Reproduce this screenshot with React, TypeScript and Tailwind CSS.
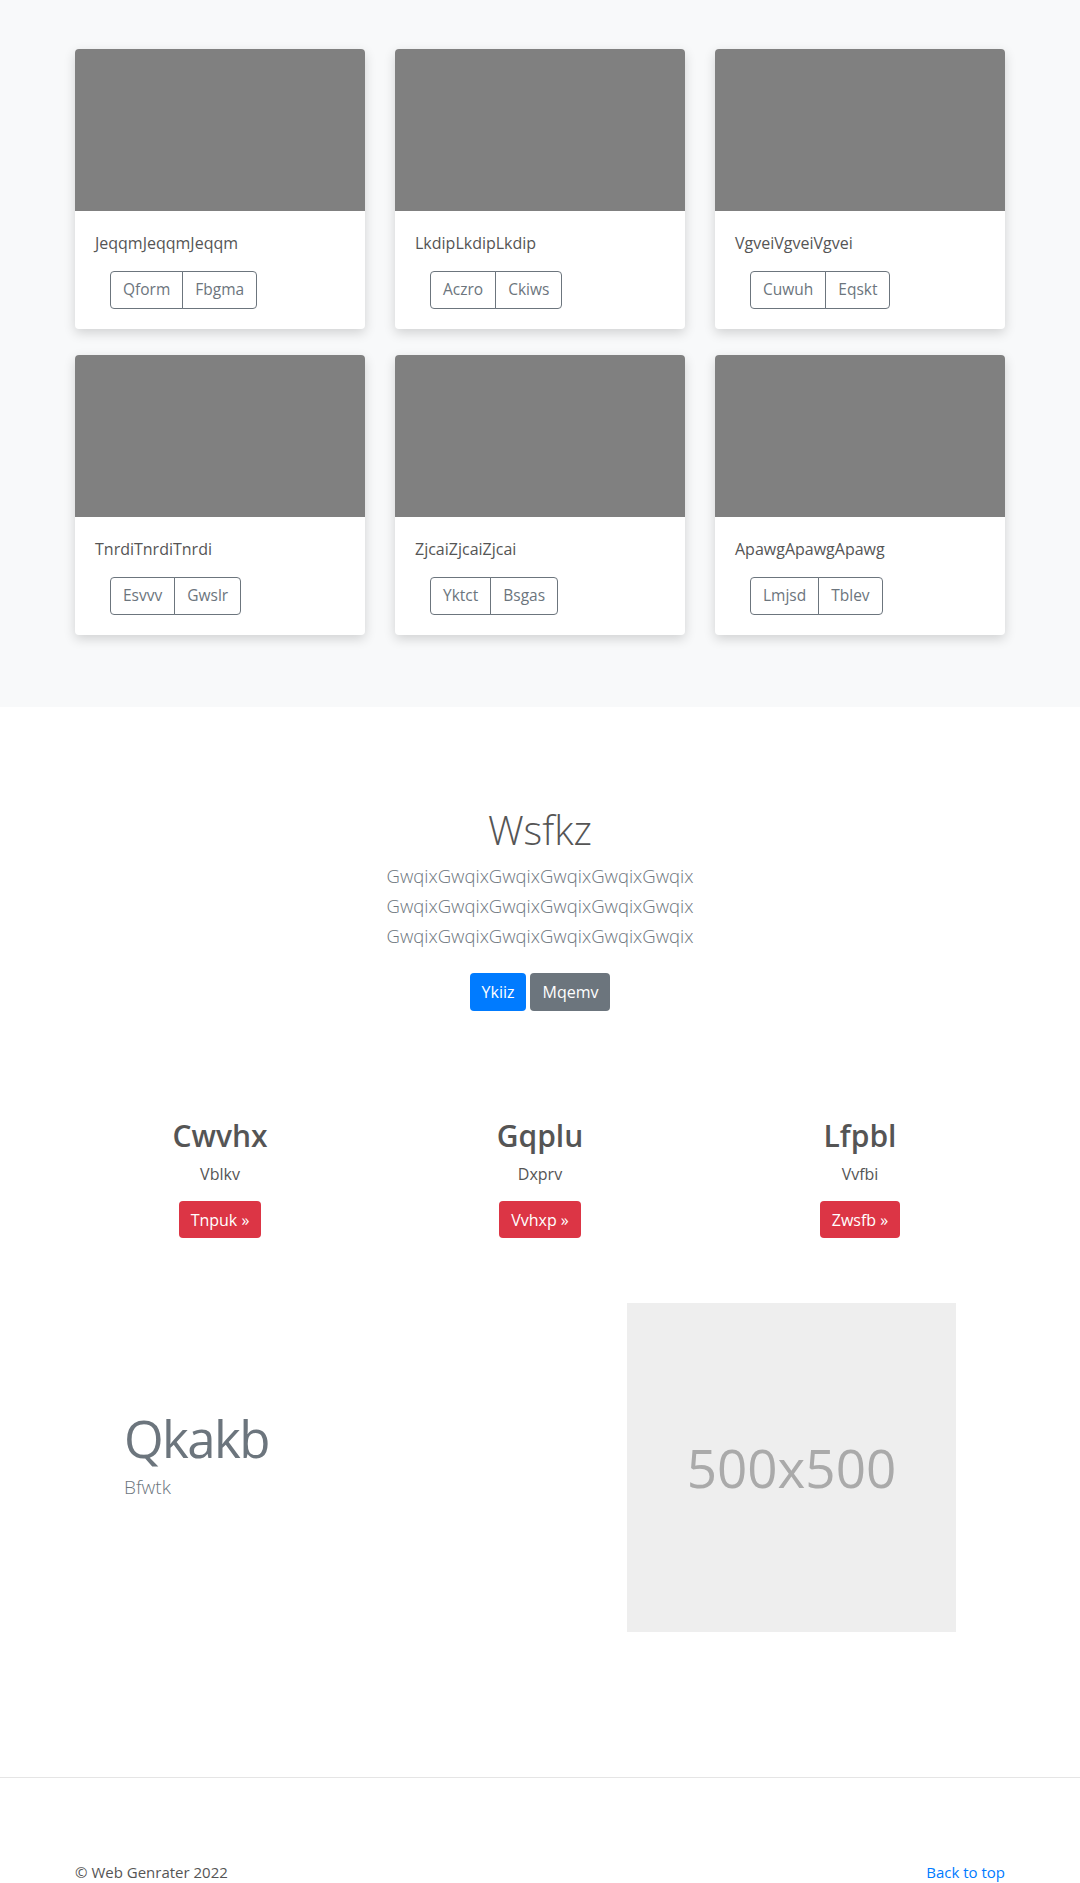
import React from "react";

const cards = [
  { title: "JeqqmJeqqmJeqqm", buttons: ["Qform", "Fbgma"] },
  { title: "LkdipLkdipLkdip", buttons: ["Aczro", "Ckiws"] },
  { title: "VgveiVgveiVgvei", buttons: ["Cuwuh", "Eqskt"] },
  { title: "TnrdiTnrdiTnrdi", buttons: ["Esvvv", "Gwslr"] },
  { title: "ZjcaiZjcaiZjcai", buttons: ["Yktct", "Bsgas"] },
  { title: "ApawgApawgApawg", buttons: ["Lmjsd", "Tblev"] },
];

const features = [
  { title: "Cwvhx", text: "Vblkv", button: "Tnpuk" },
  { title: "Gqplu", text: "Dxprv", button: "Vvhxp" },
  { title: "Lfpbl", text: "Vvfbi", button: "Zwsfb" },
];

function AlbumCard({ title, buttons }: { title: string; buttons: string[] }) {
  return (
    <div className="mb-[26px] overflow-hidden rounded-[4px] bg-white shadow-[0_4px_12px_rgba(0,0,0,0.16)]">
      <div className="h-[162px] bg-[#808080]" />
      <div className="p-5">
        <p className="mb-4 text-[16px] leading-6 text-[#555]">{title}</p>
        <div className="ml-[15px] flex">
          {buttons.map((b, i) => (
            <button
              key={b}
              className={`h-[38px] border border-[#6c757d] px-3 text-[15.5px] text-[#6c757d] ${
                i === 0 ? "rounded-l-[4px]" : "-ml-px rounded-r-[4px]"
              }`}
            >
              {b}
            </button>
          ))}
        </div>
      </div>
    </div>
  );
}

export default function App() {
  return (
    <div className="min-h-[1883px] bg-white font-['Open_Sans',sans-serif] text-[#555]">
      {/* album */}
      <section className="bg-[#f8f9fa] pt-[49px] pb-[46px]">
        <div className="mx-auto w-[960px] px-[15px]">
          <div className="grid grid-cols-3 gap-x-[30px]">
            {cards.map((c) => (
              <AlbumCard key={c.title} {...c} />
            ))}
          </div>
        </div>
      </section>

      {/* jumbotron */}
      <section className="pt-[99px] text-center">
        <h1 className="text-[40px] font-light leading-[48px] text-[#555]">Wsfkz</h1>
        <p className="mt-[7px] text-[18.5px] font-light leading-[30px] text-[#6c757d]">
          <span className="block">GwqixGwqixGwqixGwqixGwqixGwqix</span>
          <span className="block">GwqixGwqixGwqixGwqixGwqixGwqix</span>
          <span className="block">GwqixGwqixGwqixGwqixGwqixGwqix</span>
        </p>
        <div className="mt-[22px] flex justify-center gap-1">
          <button className="h-[38px] rounded-[4px] bg-[#007bff] px-3 text-[16px] text-white">
            Ykiiz
          </button>
          <button className="h-[38px] rounded-[4px] bg-[#6c757d] px-3 text-[16px] text-white">
            Mqemv
          </button>
        </div>
      </section>

      {/* three columns */}
      <section className="mx-auto mt-[106px] w-[960px]">
        <div className="grid grid-cols-3">
          {features.map((f) => (
            <div key={f.title} className="px-[15px] text-center">
              <h2 className="text-[30px] font-semibold leading-[38px] text-[#555]">{f.title}</h2>
              <p className="mt-[7px] text-[16px] leading-6 text-[#555]">{f.text}</p>
              <button className="mt-[15px] h-[37px] rounded-[4px] bg-[#dc3545] px-3 text-[16px] text-white">
                {f.button} »
              </button>
            </div>
          ))}
        </div>
      </section>

      {/* featurette */}
      <section className="mx-auto mt-[65px] flex w-[960px] items-center">
        <div className="w-[567px] pb-[26px] pl-[64px]">
          <h2 className="text-[51px] font-normal leading-[60px] tracking-[-1.6px] text-[#6c757d]">
            Qkakb
          </h2>
          <p className="mt-[5px] text-[19px] font-light leading-[28px] text-[#6c757d]">Bfwtk</p>
        </div>
        <div className="flex h-[329px] w-[329px] items-center justify-center bg-[#eeeeee]">
          <span className="text-[53px] leading-none text-[#aaaaaa]">500x500</span>
        </div>
      </section>

      {/* footer */}
      <footer className="mt-[145px] border-t border-[#e5e5e5] pt-[82px]">
        <div className="mx-auto flex w-[960px] justify-between px-[15px] text-[15px] leading-6">
          <p className="text-[#555]">© Web Genrater 2022</p>
          <a href="#" className="text-[#007bff]">
            Back to top
          </a>
        </div>
      </footer>
    </div>
  );
}
